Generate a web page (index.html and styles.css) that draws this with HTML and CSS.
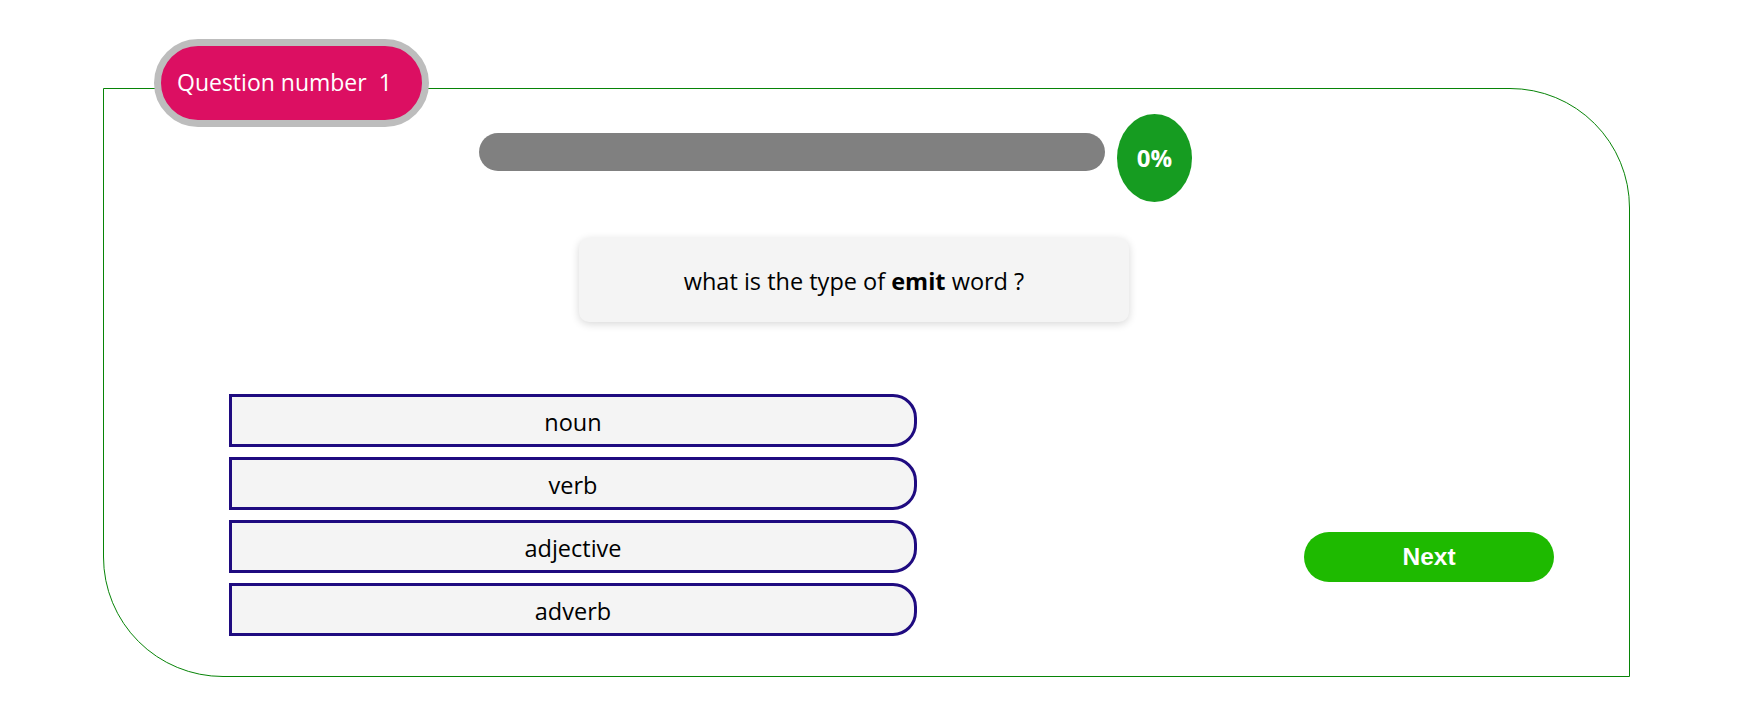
FILE: index.html
```html
<!DOCTYPE html>
<html lang="en">
<head>
<meta charset="utf-8">
<title>Quiz</title>
<link rel="stylesheet" href="styles.css">
</head>
<body>
<div class="card">
  <div class="badge">Question number&nbsp; 1</div>
  <div class="progress-row">
    <div class="progress-bar"></div>
    <div class="progress-value">0%</div>
  </div>
  <div class="question"><p class="question-text">what is the type of <b>emit</b> word ?</p></div>
  <div class="bottom-row">
    <div class="options">
      <button class="option">noun</button>
      <button class="option">verb</button>
      <button class="option">adjective</button>
      <button class="option">adverb</button>
    </div>
    <button class="next">Next</button>
  </div>
</div>
</body>
</html>
```

FILE: styles.css
```css
html, body {
  margin: 0;
  padding: 0;
  background: #ffffff;
}

body {
  font-family: "Open Sans", "Noto Sans", sans-serif;
  color: #000;
}

.card {
  position: relative;
  box-sizing: border-box;
  width: 1527px;
  height: 589px;
  margin: 88px 0 0 103px;
  border: 1px solid #078407;
  border-radius: 0 120px 0 120px;
  display: flex;
  flex-direction: column;
}

.badge {
  position: absolute;
  left: 50px;
  top: -50px;
  box-sizing: border-box;
  width: 275px;
  height: 88px;
  border: 7px solid #bdbdbd;
  border-radius: 44px;
  background: #dc0f62;
  color: #fff;
  font-size: 23px;
  display: flex;
  align-items: center;
  padding-left: 16px;
  padding-bottom: 2px;
}

.progress-row {
  display: flex;
  align-items: flex-start;
  gap: 12px;
  margin: 25px 0 0 375px;
}

.progress-bar {
  width: 626px;
  height: 38px;
  margin-top: 19px;
  border-radius: 19px;
  background: #808080;
}

.progress-value {
  width: 75px;
  height: 88px;
  border-radius: 50%;
  background: #169c21;
  color: #fff;
  font-weight: 700;
  font-size: 24px;
  display: flex;
  align-items: center;
  justify-content: center;
  padding-bottom: 2px;
  box-sizing: border-box;
}

.question {
  box-sizing: border-box;
  width: 550px;
  height: 84px;
  margin: 36px 0 0 475px;
  background: #f4f4f4;
  border-radius: 10px;
  box-shadow: 0 2px 8px rgba(0, 0, 0, 0.16);
  display: flex;
  align-items: center;
  justify-content: center;
  padding-top: 2px;
}

.question-text {
  margin: 0;
  font-size: 23.5px;
  text-align: center;
}

.question-text b {
  font-weight: 700;
}

.bottom-row {
  display: flex;
  align-items: flex-start;
  margin-top: 72px;
}

.options {
  display: flex;
  flex-direction: column;
  gap: 10px;
  margin-left: 125px;
  width: 688px;
}

.option {
  box-sizing: border-box;
  height: 53px;
  width: 100%;
  border: 3px solid #1f0b80;
  border-radius: 0 24px 24px 0;
  background: #f4f4f4;
  font-family: "Open Sans", "Noto Sans", sans-serif;
  font-size: 23.5px;
  color: #000;
  padding: 2px 0 0 0;
  cursor: pointer;
}

.next {
  box-sizing: border-box;
  width: 250px;
  height: 50px;
  margin: 138px 0 0 387px;
  border: none;
  border-radius: 25px;
  background: #1eba00;
  color: #fff;
  font-family: "Liberation Sans", Arial, sans-serif;
  font-weight: 700;
  font-size: 24.5px;
  padding: 0;
  cursor: pointer;
}
```
